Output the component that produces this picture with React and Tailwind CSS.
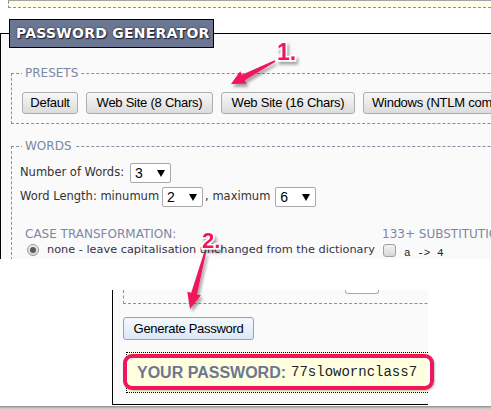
import React from "react";

const btn =
  "h-[22px] shrink-0 border border-[#adadad] rounded-[3px] bg-gradient-to-b from-[#f7f7f7] to-[#dcdcdc] text-[13px] tracking-[-0.25px] text-black font-['Liberation_Sans',Arial,sans-serif] flex items-center justify-center whitespace-nowrap";

function Select({ value, className = "" }) {
  return (
    <div
      className={
        "w-[41px] h-[20px] shrink-0 border border-[#a9a9a9] rounded-[2px] bg-white flex items-center justify-between pl-[4px] pr-[5px] text-[14px] text-black font-['Liberation_Sans',Arial,sans-serif] " +
        className
      }
    >
      <span>{value}</span>
      <svg width="8" height="7" viewBox="0 0 8 7">
        <path d="M0 0 H8 L4 7 Z" fill="#000" />
      </svg>
    </div>
  );
}

export default function App() {
  return (
    <div className="relative w-[491px] h-[409px] overflow-hidden bg-white font-['DejaVu_Sans',Verdana,sans-serif] text-[#333]">
      {/* top screenshot */}
      <div className="h-[259px] overflow-hidden">
        <div className="ml-[8px] border-t border-[#a4a4a4]">
          <div className="h-[7px] bg-[#fdfde9] border-l border-b border-dashed border-[#8a8fa0]" />
        </div>
        <div className="mt-[25px] w-[600px] border-t border-l border-black bg-[#fafafa] h-[300px]">
          <div className="-mt-[15px] ml-[8px] w-[205px] h-[29px] bg-[#6b7792] border border-black flex items-center pl-[6px]">
            <span className="text-white font-bold text-[14px] tracking-[0.25px] [text-shadow:0_0_2px_#1c2233,1px_1px_1px_#1c2233] whitespace-nowrap">
              PASSWORD GENERATOR
            </span>
          </div>

          {/* PRESETS */}
          <div className="relative mt-[25px] ml-[10px] w-[600px] border border-dashed border-[#8a8fa0] pt-[18px] pb-[9px] pl-[10px]">
            <span className="absolute -top-[8px] left-[10px] px-[3px] bg-[#fafafa] text-[12px] leading-[14px] text-[#7b88a4]">
              PRESETS
            </span>
            <div className="flex gap-[8px]">
              <div className={btn + " w-[56px]"}>Default</div>
              <div className={btn + " w-[127px]"}>Web Site (8 Chars)</div>
              <div className={btn + " w-[134px]"}>Web Site (16 Chars)</div>
              <div className={btn + " w-[170px] justify-start pl-[8px]"}>Windows (NTLM compatible)</div>
            </div>
          </div>

          {/* WORDS */}
          <div className="relative mt-[22px] ml-[10px] w-[600px] border border-dashed border-[#8a8fa0] pt-[16px] pl-[8px] h-[200px]">
            <span className="absolute -top-[8px] left-[10px] px-[3px] bg-[#fafafa] text-[12px] leading-[14px] text-[#7b88a4]">
              WORDS
            </span>
            <div className="flex items-center h-[20px] text-[11.5px]">
              <span>Number of Words:</span>
              <Select value="3" className="ml-[6px]" />
            </div>
            <div className="mt-[4px] flex items-center h-[20px] text-[11.5px]">
              <span>Word Length: minumum</span>
              <Select value="2" className="ml-[3px]" />
              <span className="ml-[2px]">, maximum</span>
              <Select value="6" className="ml-[5px]" />
            </div>
            <div className="mt-[20px] flex">
              <div className="w-[357px] ml-[5px]">
                <div className="text-[12px] leading-[14px] text-[#7b88a4]">CASE TRANSFORMATION:</div>
                <div className="mt-[2px] flex items-center h-[14px]">
                  <div className="ml-[2px] w-[12px] h-[12px] rounded-full border border-[#9a9a9a] bg-gradient-to-b from-[#f0f0f0] to-[#d6d6d6] flex items-center justify-center">
                    <div className="w-[6px] h-[6px] rounded-full bg-[#5a5a5a]" />
                  </div>
                  <span className="ml-[8px] text-[11.3px] whitespace-nowrap text-[#3a2f48]">
                    none - leave capitalisation unchanged from the dictionary
                  </span>
                </div>
              </div>
              <div>
                <div className="text-[12px] leading-[14px] text-[#7b88a4] whitespace-nowrap">133+ SUBSTITUTIONS:</div>
                <div className="mt-[3px] flex items-end">
                  <div className="ml-[1px] w-[13px] h-[13px] rounded-[3px] border border-[#a0a0a0] bg-gradient-to-b from-[#f2f2f2] to-[#d8d8d8]" />
                  <span className="ml-[8px] text-[11px] leading-[11px] -mb-[2px] font-['Liberation_Mono','Courier_New',monospace] text-[#222]">
                    a -&gt; 4
                  </span>
                </div>
              </div>
            </div>
          </div>
        </div>
      </div>

      {/* bottom screenshot */}
      <div className="mt-[31px] ml-[112px] w-[316px] h-[115px] border-l border-b border-black bg-[#fafafa] overflow-hidden">
        <div className="ml-[10px] w-[400px] h-[14px] border-l border-b border-dashed border-[#8a8fa0]">
          <div className="ml-[221px] w-[34px] h-[4px] border border-t-0 border-[#a9a9a9] rounded-b-[3px] bg-white" />
        </div>
        <div className="mt-[13px] ml-[10px] w-[131px] h-[23px] border border-[#7ea6d6] rounded-[3px] bg-gradient-to-b from-[#f4f8fd] to-[#dde8f5] text-[13px] tracking-[-0.3px] text-black font-['Liberation_Sans',Arial,sans-serif] flex items-center justify-center whitespace-nowrap">
          Generate Password
        </div>
        <div className="mt-[12px] ml-[13px] w-[400px] h-[41px] border border-dotted border-black bg-[#ffffe0] flex items-center pl-[10px] whitespace-nowrap">
          <span className="font-['Liberation_Sans',Arial,sans-serif] font-bold text-[16px] text-[#6b7792]">YOUR PASSWORD:</span>
          <span className="ml-[5px] font-['Liberation_Mono','Courier_New',monospace] text-[14px] text-[#222]">77slowornclass7</span>
        </div>
      </div>
      <div className="mt-[1px] h-[3px] bg-gradient-to-b from-[#8f8f8f] to-[#d6d6d6]" />

      {/* annotations */}
      <div className="absolute left-[123px] top-[354px] w-[311px] h-[36px] border-[4px] border-[#f0165c] rounded-[9px] shadow-[1px_1px_2px_rgba(0,0,0,0.25)]" />
      <svg className="absolute left-0 top-0 pointer-events-none" width="491" height="409" viewBox="0 0 491 409">
        <defs>
          <filter id="sh" x="-50%" y="-50%" width="200%" height="200%">
            <feDropShadow dx="2" dy="3" stdDeviation="1.5" floodColor="#000" floodOpacity="0.35" />
          </filter>
        </defs>
        <g filter="url(#sh)" fill="#f0165c">
          <polygon points="274.6,60.3 242,74.8 240.2,71.3 231,84 246.6,83.7 244.8,80.2 275.4,61.7" />
          <polygon points="204,252.7 191.2,292.7 187.3,291.7 190,309 200.9,295.3 197,294.3 206,253.3" />
        </g>
        <g
          filter="url(#sh)"
          fill="#f0165c"
          stroke="#fff"
          strokeWidth="3"
          style={{ paintOrder: "stroke" }}
          fontFamily="'Liberation Sans', Arial, sans-serif"
          fontWeight="bold"
        >
          <text x="277" y="60" fontSize="23">1.</text>
          <text x="202" y="248" fontSize="22">2.</text>
        </g>
      </svg>
    </div>
  );
}
